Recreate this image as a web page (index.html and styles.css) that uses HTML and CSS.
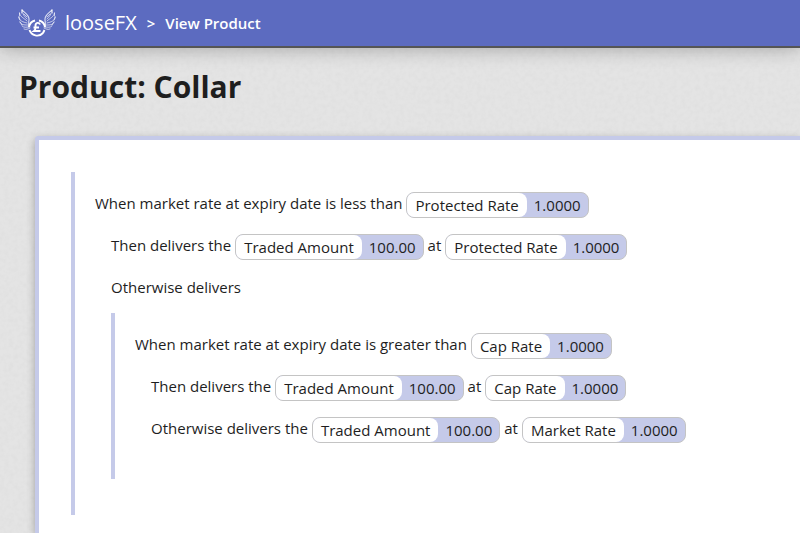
FILE: index.html
```
<!DOCTYPE html>
<html lang="en">
<head>
<meta charset="utf-8">
<title>looseFX - View Product</title>
<link rel="stylesheet" href="styles.css">
</head>
<body>
<svg class="texture" aria-hidden="true">
  <filter id="paper" x="0" y="0" width="100%" height="100%">
    <feTurbulence type="fractalNoise" baseFrequency="0.22" numOctaves="3" seed="4"/>
    <feColorMatrix values="0 0 0 0 0.4  0 0 0 0 0.4  0 0 0 0 0.4  0.14 0 0 0 -0.05"/>
  </filter>
  <rect width="100%" height="100%" filter="url(#paper)"/>
</svg>
<header class="topbar">
  <a class="brand" href="#">
    <svg class="logo" viewBox="0 0 38 28" fill="none" stroke="currentColor" aria-hidden="true">
      <g id="wing" stroke-linecap="round" stroke-opacity=".8">
        <path stroke-width="1.1" d="M4 1C7 4 11 6 11 10C11 13 10 15 11 18"/>
        <path stroke-width=".8" d="M4 1C4 5 7 8 9 10M1.500 4C2 8 6 9 9 12M.8 8C1 12 5 13 9 14M2 13C3 16 6 16 9.500 16M4 17C6 19 8 18 11 18M6 20C8 21 10 20 12 19M4 1L3.500 4M1.500 4L1.500 7M.8 8L2 11M2 13L4 16M6 5L9 8"/>
      </g>
      <use href="#wing" transform="matrix(-1 0 0 1 38 0)"/>
      <path stroke-width="1.900" d="M11.500 21A8 8 0 0 0 25 24M27 18A8 8 0 0 0 21 11.500M17 11.500A8 8 0 0 0 11 18M25 24L26.500 21"/>
      <path stroke-width="1.900" d="M22 15.500C21 13 17.500 13.500 17.500 16.500C17.500 19 18 20.500 16 22H22.500M15.500 18.500H21"/>
    </svg>
    <span>looseFX</span>
  </a>
  <span class="separator">&gt;</span>
  <span class="crumb">View Product</span>
</header>
<main class="page">
  <h1>Product: Collar</h1>
  <section class="panel">
    <div class="block">
      <p>When market rate at expiry date is less than <span class="pill"><span class="name">Protected Rate</span><span class="value">1.0000</span></span></p>
      <div class="branches">
        <p>Then delivers the <span class="pill"><span class="name">Traded Amount</span><span class="value">100.00</span></span> at <span class="pill"><span class="name">Protected Rate</span><span class="value">1.0000</span></span></p>
        <p>Otherwise delivers</p>
        <div class="block">
          <p>When market rate at expiry date is greater than <span class="pill"><span class="name">Cap Rate</span><span class="value">1.0000</span></span></p>
          <div class="branches">
            <p>Then delivers the <span class="pill"><span class="name">Traded Amount</span><span class="value">100.00</span></span> at <span class="pill"><span class="name">Cap Rate</span><span class="value">1.0000</span></span></p>
            <p>Otherwise delivers the <span class="pill"><span class="name">Traded Amount</span><span class="value">100.00</span></span> at <span class="pill"><span class="name">Market Rate</span><span class="value">1.0000</span></span></p>
          </div>
        </div>
      </div>
    </div>
  </section>
</main>
</body>
</html>
```
FILE: styles.css
```
* { box-sizing: border-box; }

body {
  margin: 0;
  min-height: 100vh;
  display: flex;
  flex-direction: column;
  background: #e4e4e4;
  color: #1e1e1e;
  font: 15px/24px "Segoe UI", "Open Sans", sans-serif;
}

.texture {
  position: absolute;
  inset: 0;
  width: 100%;
  height: 100%;
  z-index: -1;
}

.topbar {
  display: flex;
  align-items: center;
  height: 48px;
  padding: 0 18px;
  background: #5c6bc0;
  border-bottom: 2px solid #555;
  box-shadow: 0 0 20px rgba(0, 0, 0, .3);
  color: #fff;
}

.brand {
  display: flex;
  align-items: center;
  gap: 9px;
  color: inherit;
  font-size: 20px;
  text-decoration: none;
}

.logo {
  width: 38px;
  height: 28px;
}

.separator {
  margin: 0 10px;
  font-size: 15px;
  font-weight: 600;
}

.crumb { font-weight: 600; }

.page {
  flex: 1;
  display: flex;
  flex-direction: column;
}

h1 {
  margin: 19px 19px 29px;
  font-size: 30px;
  line-height: 40px;
  font-weight: 700;
}

.panel {
  flex: 1;
  margin-left: 35px;
  padding: 32px 0 16px 32px;
  background: #fff;
  border: solid #c5cae9;
  border-width: 4px 0 0 4px;
  border-radius: 4px 0 0 0;
  box-shadow: 0 3px 8px rgba(0, 0, 0, .3);
}

.block {
  padding: 12px 0 28px 20px;
  border-left: 4px solid #c5cae9;
}

.branches { padding-left: 16px; }

.branches > .block { margin: 3px 0 8px; }

p {
  display: flex;
  align-items: center;
  gap: 4px;
  min-height: 42px;
  margin: 0;
  padding-bottom: 4px;
}

.pill {
  display: inline-flex;
  height: 26px;
  margin-top: 4px;
  background: #c5cae9;
  border: 1px solid #c4c4c4;
  border-radius: 8px;
  overflow: hidden;
}

.name {
  padding: 0 8px;
  background: #fff;
  border-radius: 0 8px 8px 0;
}

.value { padding: 0 7px; }
```
